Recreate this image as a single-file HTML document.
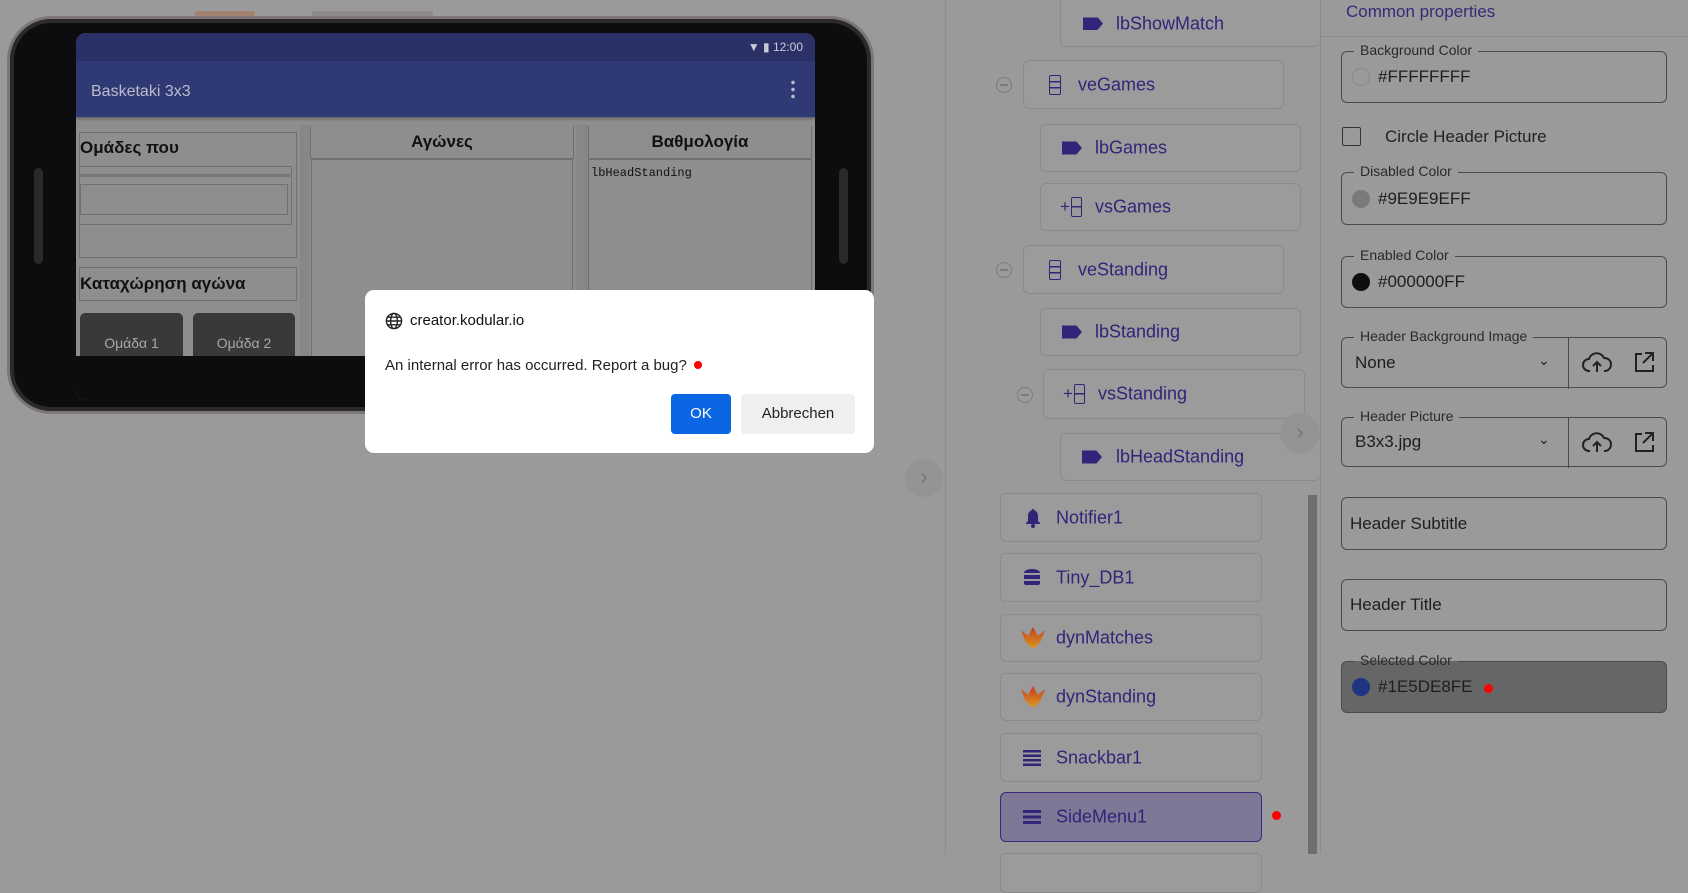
<!DOCTYPE html>
<html><head><meta charset="utf-8"><style>
*{box-sizing:border-box;margin:0;padding:0}
body{width:1688px;height:854px;overflow:hidden;background:#9a9a9a;font-family:"Liberation Sans","DejaVu Sans",sans-serif;position:relative}
.a{position:absolute}
.card{position:absolute;border:1px solid #8a8a8a;border-radius:6px;background:#9b9b9b;color:#33247a;font-size:18px}
.card .t{position:absolute;top:50%;transform:translateY(-50%)}
.card .i{position:absolute;top:50%;transform:translateY(-50%)}
.min{position:absolute;width:16px;height:16px;border:1.5px solid #7c7c7c;border-radius:50%}
.min:after{content:"";position:absolute;left:3px;right:3px;top:6px;height:1.5px;background:#7c7c7c}
.fld{position:absolute;left:1341px;width:326px;border:1.3px solid #4a4a4a;border-radius:6px;color:#1e1e1e}
.lbl{position:absolute;top:-10px;left:12px;background:#9a9a9a;padding:0 6px;font-size:14px;color:#2a2a2a}
.val{position:absolute;left:36px;top:50%;transform:translateY(-50%);font-size:17px}
.dot{position:absolute;left:10px;top:50%;margin-top:-9px;width:18px;height:18px;border-radius:50%}
.ph{position:absolute;border:1.3px solid #707070}
</style></head><body>

<!-- phone -->
<div class="a" style="left:195px;top:11px;width:60px;height:5px;background:#a3816f;border-radius:2px"></div>
<div class="a" style="left:312px;top:11px;width:121px;height:5px;background:#8f8a8a;border-radius:2px"></div>
<div class="a" style="left:7px;top:16px;width:867px;height:398px;border-radius:44px;background:#0d0d0f;border:3px solid #7d7676;box-shadow:inset 0 0 0 4px #2a2a2c"></div>
<div class="a" style="left:34px;top:168px;width:9px;height:96px;border-radius:5px;background:#2a2a2c"></div>
<div class="a" style="left:839px;top:168px;width:9px;height:96px;border-radius:5px;background:#2a2a2c"></div>
<div class="a" style="left:76px;top:33px;width:739px;height:367px;border-radius:10px;overflow:hidden;background:#8e8e8e">
  <div class="a" style="left:0;top:0;width:739px;height:28px;background:#2a3166"></div>
  <div class="a" style="right:12px;top:7px;color:#c9cbd8;font-size:12px">&#9660;&nbsp;&#9646;&nbsp;12:00</div>
  <div class="a" style="left:0;top:28px;width:739px;height:56px;background:#2f3a75;box-shadow:0 2px 3px rgba(0,0,0,.3)"></div>
  <div class="a" style="left:15px;top:50px;color:#b9bccd;font-size:16px">Basketaki 3x3</div>
  <div class="a" style="left:715px;top:46px;width:4px;height:20px;background:radial-gradient(circle,#b9bccd 1.6px,transparent 2px) 0 0/4px 7px"></div>
  <!-- left column -->
  <div class="ph" style="left:3px;top:99px;width:218px;height:126px"></div>
  <div class="a" style="left:4px;top:105px;font-size:17px;font-weight:bold;color:#111;height:18px;overflow:hidden">Ομάδες που</div>
  <div class="ph" style="left:3px;top:133px;width:213px;height:59px"></div>
  <div class="a" style="left:4px;top:141px;width:210px;height:3px;background:#777"></div>
  <div class="ph" style="left:4px;top:151px;width:208px;height:31px"></div>
  <div class="ph" style="left:3px;top:234px;width:218px;height:34px"></div>
  <div class="a" style="left:4px;top:241px;font-size:17px;font-weight:bold;color:#111">Καταχώρηση αγώνα</div>
  <div class="a" style="left:4px;top:280px;width:103px;height:50px;background:#39393b;border-radius:5px;color:#a8a8a8;font-size:14px;text-align:center;padding-top:22px">Ομάδα 1</div>
  <div class="a" style="left:117px;top:280px;width:102px;height:50px;background:#39393b;border-radius:5px;color:#a8a8a8;font-size:14px;text-align:center;padding-top:22px">Ομάδα 2</div>
  <div class="a" style="left:224px;top:92px;width:10px;height:240px;background:#878787"></div>
  <div class="a" style="left:500px;top:92px;width:12px;height:240px;background:#878787"></div>
  <div class="ph" style="left:234px;top:93px;width:264px;height:33px;border-top:none"></div>
  <div class="a" style="left:234px;top:99px;width:264px;text-align:center;font-size:17px;font-weight:bold;color:#111">Αγώνες</div>
  <div class="ph" style="left:235px;top:126px;width:262px;height:220px"></div>
  <div class="ph" style="left:512px;top:93px;width:224px;height:33px;border-top:none"></div>
  <div class="a" style="left:512px;top:99px;width:224px;text-align:center;font-size:17px;font-weight:bold;color:#111">Βαθμολογία</div>
  <div class="ph" style="left:512px;top:126px;width:224px;height:220px"></div>
  <div class="a" style="left:515px;top:133px;font-family:'Liberation Mono',monospace;font-size:12px;color:#111">lbHeadStanding</div>
  <div class="a" style="left:0;top:323px;width:739px;height:44px;background:#0d0d0f"></div>
</div>

<!-- dialog -->
<div class="a" style="left:365px;top:290px;width:509px;height:163px;background:#fff;border-radius:9px">
  <svg class="a" style="left:20px;top:22px" width="18" height="18" viewBox="0 0 18 18" fill="none" stroke="#222" stroke-width="1.4"><circle cx="9" cy="9" r="7.6"/><ellipse cx="9" cy="9" rx="3.4" ry="7.6"/><path d="M1.4 9h15.2M2.5 5.2h13M2.5 12.8h13"/></svg>
  <div class="a" style="left:45px;top:22px;font-size:15px;color:#111">creator.kodular.io</div>
  <div class="a" style="left:20px;top:67px;font-size:15px;color:#222">An internal error has occurred. Report a bug? <span style="display:inline-block;width:8px;height:8px;border-radius:50%;background:#f00;margin-left:3px;vertical-align:1px"></span></div>
  <div class="a" style="left:306px;top:104px;width:60px;height:40px;background:#0b66e4;border-radius:4px;color:#fff;font-size:15px;text-align:center;line-height:40px">OK</div>
  <div class="a" style="left:376px;top:104px;width:114px;height:40px;background:#efeff1;border-radius:4px;color:#222;font-size:15px;text-align:center;line-height:40px">Abbrechen</div>
</div>

<div class="a" style="left:905px;top:459px;width:38px;height:38px;border-radius:50%;background:#949494;color:#777;font-size:22px;text-align:center;line-height:36px">&#8250;</div>

<!-- dividers -->
<div class="a" style="left:945px;top:0;width:1px;height:854px;background:#8c8c8c"></div>
<div class="a" style="left:1320px;top:0;width:1px;height:854px;background:#8c8c8c"></div>

<!-- tree -->
<div class="card" style="left:1060px;top:-10px;width:260px;height:57px;border-right:none"><span class="i" style="left:22px;margin-top:5px;width:20px;height:13px;background:#33247a;clip-path:polygon(0 0,72% 0,100% 50%,72% 100%,0 100%)"></span><span class="t" style="left:55px;margin-top:5px">lbShowMatch</span></div>

<div class="min" style="left:996px;top:77px"></div>
<div class="card" style="left:1023px;top:60px;width:261px;height:49px"><span class="i" style="left:25px;width:12px;height:20px;border:1.5px solid #33247a;border-radius:2px;background:linear-gradient(#33247a,#33247a) 0 5px/100% 1.5px no-repeat,linear-gradient(#33247a,#33247a) 0 11px/100% 1.5px no-repeat"></span><span class="t" style="left:54px">veGames</span></div>
<div class="card" style="left:1040px;top:124px;width:261px;height:48px"><span class="i" style="left:21px;width:20px;height:13px;background:#33247a;clip-path:polygon(0 0,72% 0,100% 50%,72% 100%,0 100%)"></span><span class="t" style="left:54px">lbGames</span></div>
<div class="card" style="left:1040px;top:183px;width:261px;height:48px"><span class="i" style="left:19px;font-size:17px">+</span><span class="i" style="left:30px;width:11px;height:20px;border:1.5px solid #33247a;border-radius:2px;background:linear-gradient(#33247a,#33247a) 0 8px/100% 1.5px no-repeat"></span><span class="t" style="left:54px">vsGames</span></div>
<div class="min" style="left:996px;top:262px"></div>
<div class="card" style="left:1023px;top:245px;width:261px;height:49px"><span class="i" style="left:25px;width:12px;height:20px;border:1.5px solid #33247a;border-radius:2px;background:linear-gradient(#33247a,#33247a) 0 5px/100% 1.5px no-repeat,linear-gradient(#33247a,#33247a) 0 11px/100% 1.5px no-repeat"></span><span class="t" style="left:54px">veStanding</span></div>
<div class="card" style="left:1040px;top:308px;width:261px;height:48px"><span class="i" style="left:21px;width:20px;height:13px;background:#33247a;clip-path:polygon(0 0,72% 0,100% 50%,72% 100%,0 100%)"></span><span class="t" style="left:54px">lbStanding</span></div>
<div class="min" style="left:1017px;top:387px"></div>
<div class="card" style="left:1043px;top:369px;width:262px;height:50px"><span class="i" style="left:19px;font-size:17px">+</span><span class="i" style="left:30px;width:11px;height:20px;border:1.5px solid #33247a;border-radius:2px;background:linear-gradient(#33247a,#33247a) 0 8px/100% 1.5px no-repeat"></span><span class="t" style="left:54px">vsStanding</span></div>
<div class="card" style="left:1060px;top:433px;width:260px;height:48px;border-right:none"><span class="i" style="left:21px;width:20px;height:13px;background:#33247a;clip-path:polygon(0 0,72% 0,100% 50%,72% 100%,0 100%)"></span><span class="t" style="left:55px">lbHeadStanding</span></div>
<div class="a" style="left:1280px;top:413px;width:40px;height:40px;border-radius:50%;background:#949494;color:#777;font-size:22px;text-align:center;line-height:38px">&#8250;</div>

<div class="card" style="left:1000px;top:493px;width:262px;height:49px"><svg class="i" style="left:24px" width="16" height="20" viewBox="0 0 16 20"><path d="M8 1c1 0 1.5.7 1.5 1.5C12 3.3 13 5.5 13 8v5l2 2v1H1v-1l2-2V8c0-2.5 1-4.7 3.5-5.5C6.5 1.7 7 1 8 1z" fill="#33247a"/><circle cx="8" cy="18" r="2" fill="#33247a"/></svg><span class="t" style="left:55px">Notifier1</span></div>
<div class="card" style="left:1000px;top:553px;width:262px;height:49px"><span class="i" style="left:23px;width:16px;height:18px;border-radius:8px/4px;background:repeating-linear-gradient(#33247a 0 4px,#9b9b9b 4px 6px)"></span><span class="t" style="left:55px">Tiny_DB1</span></div>
<div class="card" style="left:1000px;top:614px;width:262px;height:48px"><span class="i" style="left:20px;width:24px;height:22px;background:linear-gradient(#c63b1f,#d99a20);clip-path:polygon(0 15%,30% 40%,50% 0,70% 40%,100% 15%,80% 70%,50% 100%,20% 70%)"></span><span class="t" style="left:55px">dynMatches</span></div>
<div class="card" style="left:1000px;top:673px;width:262px;height:48px"><span class="i" style="left:20px;width:24px;height:22px;background:linear-gradient(#c63b1f,#d99a20);clip-path:polygon(0 15%,30% 40%,50% 0,70% 40%,100% 15%,80% 70%,50% 100%,20% 70%)"></span><span class="t" style="left:55px">dynStanding</span></div>
<div class="card" style="left:1000px;top:733px;width:262px;height:49px"><span class="i" style="left:22px;width:18px;height:16px;background:repeating-linear-gradient(#33247a 0 2.5px,transparent 2.5px 4.5px)"></span><span class="t" style="left:55px">Snackbar1</span></div>
<div class="card" style="left:1000px;top:792px;width:262px;height:50px;background:#7e7796;border:1.5px solid #3b2a80"><span class="i" style="left:22px;width:18px;height:14px;background:repeating-linear-gradient(#33247a 0 3px,transparent 3px 5.5px)"></span><span class="t" style="left:55px">SideMenu1</span></div>
<div class="a" style="left:1272px;top:811px;width:9px;height:9px;border-radius:50%;background:#f00"></div>
<div class="card" style="left:1000px;top:853px;width:262px;height:40px"></div>
<div class="a" style="left:1308px;top:495px;width:9px;height:359px;background:#6e6e6e"></div>

<!-- properties -->
<div class="a" style="left:1346px;top:2px;font-size:17px;color:#35297a">Common properties</div>
<div class="a" style="left:1321px;top:36px;width:367px;height:1px;background:#8a8a8a"></div>

<div class="fld" style="top:51px;height:52px"><span class="lbl">Background Color</span><span class="dot" style="border:1px solid #888"></span><span class="val">#FFFFFFFF</span></div>
<div class="a" style="left:1342px;top:127px;width:19px;height:19px;border:1.5px solid #333;border-radius:2px"></div>
<div class="a" style="left:1385px;top:127px;font-size:17px;color:#222">Circle Header Picture</div>
<div class="fld" style="top:172px;height:53px"><span class="lbl">Disabled Color</span><span class="dot" style="background:#7a7a7a"></span><span class="val">#9E9E9EFF</span></div>
<div class="fld" style="top:256px;height:52px"><span class="lbl">Enabled Color</span><span class="dot" style="background:#0e0e0e"></span><span class="val">#000000FF</span></div>
<div class="fld" style="top:337px;height:51px"><span class="lbl">Header Background Image</span><span class="val" style="left:13px">None</span><span class="a" style="left:196px;top:14px;font-size:14px">&#8964;</span><div class="a" style="left:226px;top:0;width:1px;height:51px;background:#4a4a4a"></div>
<svg class="a" style="left:240px;top:13px" width="30" height="24" viewBox="0 0 30 24" fill="none" stroke="#222" stroke-width="2"><path d="M8 20H7a6 6 0 0 1 0-12 8 8 0 0 1 15-1 6 6 0 0 1 1 13h-1"/><path d="M15 21v-9M11 15l4-4 4 4"/></svg>
<svg class="a" style="left:291px;top:13px" width="22" height="22" viewBox="0 0 22 22" fill="none" stroke="#222" stroke-width="2"><path d="M12 2h8v8M20 2L10 12M9 3H3v17h17v-6"/></svg></div>
<div class="fld" style="top:417px;height:50px"><span class="lbl">Header Picture</span><span class="val" style="left:13px">B3x3.jpg</span><span class="a" style="left:196px;top:13px;font-size:14px">&#8964;</span><div class="a" style="left:226px;top:0;width:1px;height:50px;background:#4a4a4a"></div>
<svg class="a" style="left:240px;top:13px" width="30" height="24" viewBox="0 0 30 24" fill="none" stroke="#222" stroke-width="2"><path d="M8 20H7a6 6 0 0 1 0-12 8 8 0 0 1 15-1 6 6 0 0 1 1 13h-1"/><path d="M15 21v-9M11 15l4-4 4 4"/></svg>
<svg class="a" style="left:291px;top:13px" width="22" height="22" viewBox="0 0 22 22" fill="none" stroke="#222" stroke-width="2"><path d="M12 2h8v8M20 2L10 12M9 3H3v17h17v-6"/></svg></div>
<div class="fld" style="top:497px;height:53px"><span class="val" style="left:8px">Header Subtitle</span></div>
<div class="fld" style="top:579px;height:52px"><span class="val" style="left:8px">Header Title</span></div>
<div class="fld" style="top:661px;height:52px;background:#666"><span class="lbl" style="background:linear-gradient(#9a9a9a 55%,#666 55%)">Selected Color</span><span class="dot" style="background:#1d3582"></span><span class="val">#1E5DE8FE</span><span class="a" style="left:142px;top:22px;width:9px;height:9px;border-radius:50%;background:#f00"></span></div>
</body></html>
